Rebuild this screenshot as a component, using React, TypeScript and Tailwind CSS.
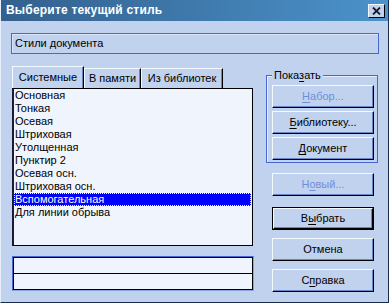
import React from "react";

const items = [
  "Основная",
  "Тонкая",
  "Осевая",
  "Штриховая",
  "Утолщенная",
  "Пунктир 2",
  "Осевая осн.",
  "Штриховая осн.",
  "Вспомогательная",
  "Для линии обрыва",
];

interface BtnProps {
  pre: string;
  u?: string;
  post?: string;
  disabled?: boolean;
  def?: boolean;
}

function Btn({ pre, u, post, disabled, def }: BtnProps) {
  const inner = (
    <div
      className={`flex items-center justify-center bg-[#c1d2ee] border border-t-[#f4f8ff] border-l-[#f4f8ff] border-r-black border-b-black shadow-[inset_-1px_-1px_0_#6a86c4] ${
        def ? "h-[21px] w-[100px]" : "h-[23px] w-[102px]"
      } ${disabled ? "text-[#6f8fda]" : "text-black"}`}
    >
      <span>
        {pre}
        {u && <span className="underline underline-offset-2">{u}</span>}
        {post}
      </span>
    </div>
  );
  if (def) {
    return <div className="h-[23px] w-[102px] border border-black">{inner}</div>;
  }
  return inner;
}

export default function App() {
  return (
    <div className="w-[391px] h-[305px] bg-white font-['Liberation_Sans',Arial,sans-serif] text-[11px] leading-[13px] text-black">
      <div className="w-[389px] h-[303px] bg-[#c1d2ee] border-l border-l-[#e6eefc] border-r border-r-[#1a2a4a] border-b border-b-[#1a2a4a] flex flex-col">
        {/* title bar */}
        <div className="h-[21px] flex items-center justify-between pl-[5px] pr-[2px] bg-gradient-to-r from-[#33608e] to-[#4b93cb]">
          <span className="text-white font-bold text-[12px] leading-[15px] tracking-[0.2px]">Выберите текущий стиль</span>
          <div className="w-[17px] h-[14px] mr-[1px] bg-[#c1d2ee] border border-t-[#f4f8ff] border-l-[#f4f8ff] border-r-black border-b-black flex items-center justify-center">
            <svg width="9" height="8" viewBox="0 0 9 8">
              <path d="M1 0.5 L8 7.5 M8 0.5 L1 7.5" stroke="#1a1a2a" strokeWidth="1.8" />
            </svg>
          </div>
        </div>

        <div className="pl-[10px] pt-[12px]">
          <div className="w-[368px] h-[21px] border border-[#4569d0] shadow-[inset_1px_1px_0_#dbe5fa] flex items-center pl-[3px]">
            Стили документа
          </div>
        </div>

        <div className="flex pl-[11px] pt-[12px] gap-[13px]">
          {/* left column */}
          <div className="w-[241px] flex flex-col">
            <div className="flex items-end h-[22px]">
              <div className="w-[72px] h-[22px] border-l border-t border-l-[#f4f8ff] border-t-[#f4f8ff] border-r border-r-black shadow-[inset_-1px_0_0_#6a86c4] flex items-center justify-center pb-[1px]">
                Системные
              </div>
              <div className="w-[57px] h-[20px] border-l border-t border-l-[#f4f8ff] border-t-[#f4f8ff] border-r border-r-black shadow-[inset_-1px_0_0_#6a86c4] flex items-center justify-center">
                В памяти
              </div>
              <div className="w-[82px] h-[20px] border-l border-t border-l-[#f4f8ff] border-t-[#f4f8ff] border-r border-r-black shadow-[inset_-1px_0_0_#6a86c4] flex items-center justify-center">
                Из библиотек
              </div>
            </div>
            <div className="h-[158px] bg-[#f0f4fc] border border-black border-l-2 border-l-[#1a1a3a] pr-[1px]">
              {items.map((it) =>
                it === "Вспомогательная" ? (
                  <div
                    key={it}
                    className="h-[13px] bg-[#0000ff] text-white pl-[1px] outline outline-1 outline-dotted outline-[#ffff80] -outline-offset-1 flex items-center"
                  >
                    {it}
                  </div>
                ) : (
                  <div key={it} className="h-[13px] pl-[1px] flex items-center">
                    {it}
                  </div>
                )
              )}
            </div>
            <div className="mt-[10px] w-[242px] h-[35px] border border-[#8aa4e0] border-t-[#4569d0] border-l-[#4569d0]">
              <div className="h-full bg-[#f0f4fc] border border-black flex flex-col">
                <div className="h-[16px] border-b border-black" />
                <div className="flex-1" />
              </div>
            </div>
          </div>

          {/* right column */}
          <div className="w-[112px] pt-[9px] flex flex-col">
            <div className="relative h-[88px] border border-[#4569d0] shadow-[inset_1px_1px_0_#e6eefc] pl-[5px] pt-[9px] flex flex-col gap-[3px]">
              <span className="absolute -top-[7px] left-[5px] px-[2px] bg-[#c1d2ee]">
                Пока<span className="underline underline-offset-2">з</span>ать
              </span>
              <Btn pre="" u="Н" post="абор..." disabled />
              <Btn pre="" u="Б" post="иблиотеку..." />
              <Btn pre="" u="Д" post="окумент" />
            </div>
            <div className="pl-[6px] pt-[10px] flex flex-col">
              <Btn pre="Н" u="о" post="вый..." disabled />
              <div className="mt-[11px]">
                <Btn pre="В" u="ы" post="брать" def />
              </div>
              <div className="mt-[8px]">
                <Btn pre="Отмена" />
              </div>
              <div className="mt-[8px]">
                <Btn pre="С" u="п" post="равка" />
              </div>
            </div>
          </div>
        </div>
      </div>
    </div>
  );
}
